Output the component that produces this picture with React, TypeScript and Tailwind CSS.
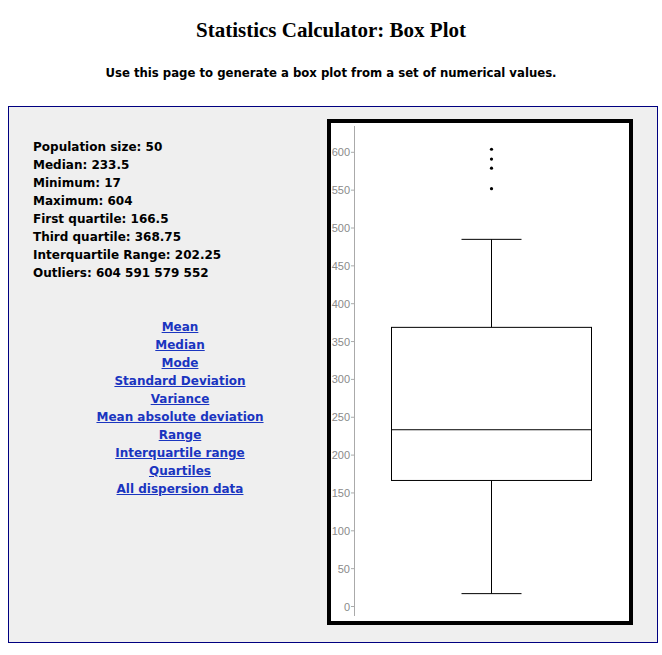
import React from "react"

const stats = [
  ["Population size", "50"],
  ["Median", "233.5"],
  ["Minimum", "17"],
  ["Maximum", "604"],
  ["First quartile", "166.5"],
  ["Third quartile", "368.75"],
  ["Interquartile Range", "202.25"],
  ["Outliers", "604 591 579 552"],
]

const links = [
  "Mean",
  "Median",
  "Mode",
  "Standard Deviation",
  "Variance",
  "Mean absolute deviation",
  "Range",
  "Interquartile range",
  "Quartiles",
  "All dispersion data",
]

// box plot values
const box = { min: 17, q1: 166.5, median: 233.5, q3: 368.75, whiskerTop: 485 }
const outliers = [604, 591, 579, 552]

const zeroY = 483.5
const scale = 0.757
const yOf = (v: number) => zeroY - v * scale

function BoxPlot() {
  const ticks = [0, 50, 100, 150, 200, 250, 300, 350, 400, 450, 500, 550, 600]
  const cx = 160.5
  return (
    <svg width="298" height="498" viewBox="0 0 298 498" className="block">
      {/* y axis */}
      <line x1="23.5" y1="3" x2="23.5" y2="493" stroke="#aaaaaa" strokeWidth="1" />
      {ticks.map((t) => (
        <g key={t}>
          <line x1="20" y1={yOf(t)} x2="23.5" y2={yOf(t)} stroke="#aaaaaa" strokeWidth="1" />
          <text
            x="19"
            y={yOf(t) + 4}
            textAnchor="end"
            fontSize="11"
            fill="#8a8a8a"
            fontFamily="'Liberation Sans', Arial, sans-serif"
          >
            {t}
          </text>
        </g>
      ))}

      {/* whiskers */}
      <line x1={cx} y1={yOf(box.whiskerTop)} x2={cx} y2={yOf(box.q3)} stroke="#000" strokeWidth="1" />
      <line x1={cx} y1={yOf(box.q1)} x2={cx} y2={yOf(box.min)} stroke="#000" strokeWidth="1" />
      <line x1="130.5" y1={yOf(box.whiskerTop)} x2="190.5" y2={yOf(box.whiskerTop)} stroke="#000" strokeWidth="1" />
      <line x1="130.5" y1={yOf(box.min)} x2="190.5" y2={yOf(box.min)} stroke="#000" strokeWidth="1" />

      {/* box */}
      <rect
        x="60.5"
        y={yOf(box.q3)}
        width="200"
        height={yOf(box.q1) - yOf(box.q3)}
        fill="#fff"
        stroke="#000"
        strokeWidth="1"
      />
      <line x1="60.5" y1={yOf(box.median)} x2="260.5" y2={yOf(box.median)} stroke="#000" strokeWidth="1" />

      {outliers.map((o) => (
        <circle key={o} cx={cx} cy={yOf(o)} r="1.6" fill="#000" />
      ))}
    </svg>
  )
}

export default function App() {
  return (
    <div className="min-h-screen bg-white text-black font-['DejaVu_Sans',Verdana,sans-serif]">
      <h1 className="pt-[18px] text-center font-['Liberation_Serif',Georgia,serif] text-[21px] font-bold leading-[24px]">
        Statistics Calculator: Box Plot
      </h1>
      <p className="mt-[22px] text-center text-[13px] font-bold leading-[18px] font-['DejaVu_Sans_Condensed','DejaVu_Sans',Tahoma,sans-serif]">
        Use this page to generate a box plot from a set of numerical values.
      </p>

      <div className="mx-2 mt-[24px] flex w-[650px] border border-[#000080] bg-[#efefef] pt-[12px] pb-[17px]">
        <div className="ml-6 flex w-[294px] flex-col pt-[19px] text-[12px] font-bold leading-[18px]">
          <div>
            {stats.map(([label, value]) => (
              <div key={label}>
                {label}: {value}
              </div>
            ))}
          </div>
          <ul className="mt-[36px] flex flex-col items-center">
            {links.map((l) => (
              <li key={l}>
                <a href="#" className="text-[#1a35c0] underline">
                  {l}
                </a>
              </li>
            ))}
          </ul>
        </div>
        <div className="border-4 border-black bg-white">
          <BoxPlot />
        </div>
      </div>
    </div>
  )
}
